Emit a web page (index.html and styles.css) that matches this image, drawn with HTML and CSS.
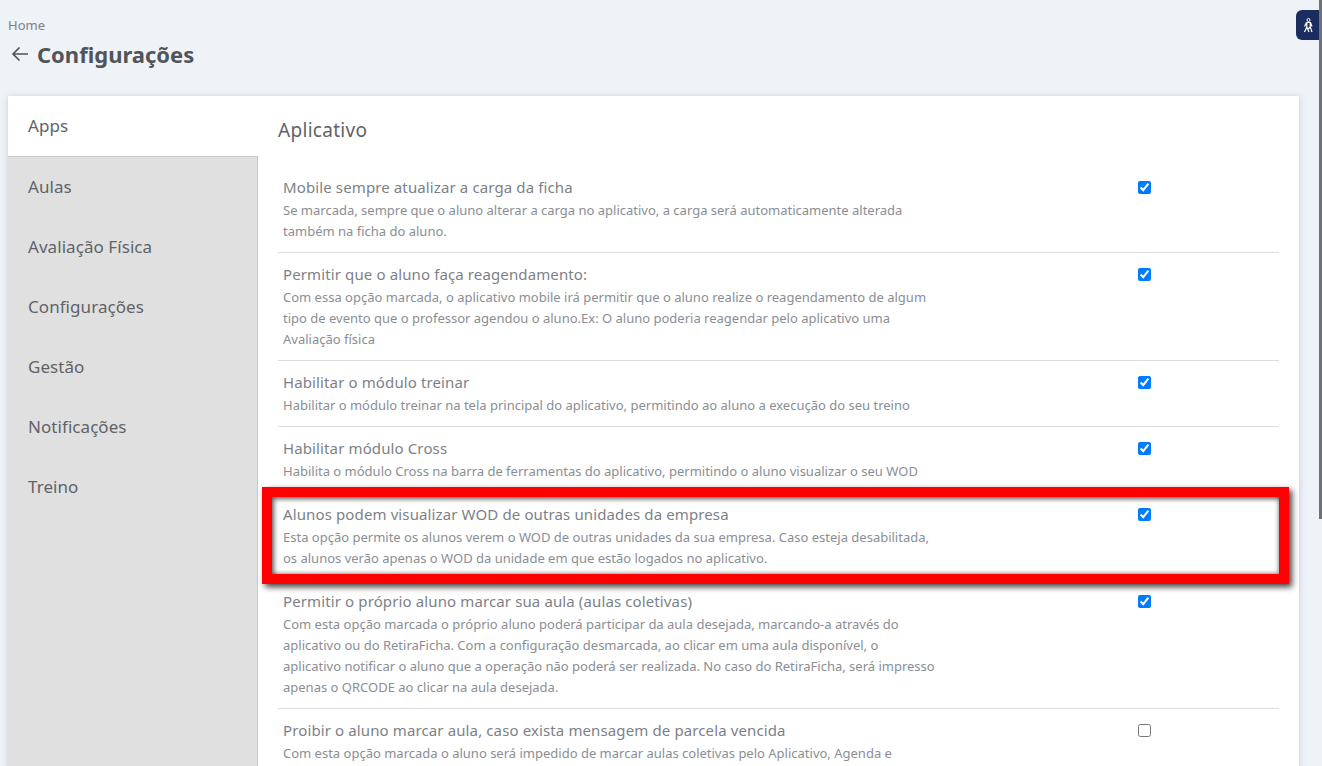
FILE: index.html
```html
<!DOCTYPE html>
<html lang="pt-BR">
<head>
    <meta charset="UTF-8">
    <title>Configurações</title>
    <link rel="stylesheet" href="styles.css">
</head>
<body>
    <div class="page">
        <div class="breadcrumb">Home</div>
        <div class="page-title">
            <svg class="back" viewBox="0 0 18 16" width="18" height="16"><path d="M17 8H2M8.500 1.500L2 8l6.500 6.500" fill="none" stroke="#51555a" stroke-width="1.700"/></svg>
            <h1>Configurações</h1>
        </div>

        <div class="card">
            <ul class="tabs">
                <li class="active">Apps</li>
                <li>Aulas</li>
                <li>Avaliação Física</li>
                <li>Configurações</li>
                <li>Gestão</li>
                <li>Notificações</li>
                <li>Treino</li>
            </ul>
            <div class="content">
                <h2>Aplicativo</h2>

                <div class="row">
                    <div>
                        <div class="title">Mobile sempre atualizar a carga da ficha</div>
                        <div class="desc">Se marcada, sempre que o aluno alterar a carga no aplicativo, a carga será automaticamente alterada<br>também na ficha do aluno.</div>
                    </div>
                    <input type="checkbox" checked>
                </div>
                <div class="row">
                    <div>
                        <div class="title">Permitir que o aluno faça reagendamento:</div>
                        <div class="desc">Com essa opção marcada, o aplicativo mobile irá permitir que o aluno realize o reagendamento de algum<br>tipo de evento que o professor agendou o aluno.Ex: O aluno poderia reagendar pelo aplicativo uma<br>Avaliação física</div>
                    </div>
                    <input type="checkbox" checked>
                </div>
                <div class="row">
                    <div>
                        <div class="title">Habilitar o módulo treinar</div>
                        <div class="desc">Habilitar o módulo treinar na tela principal do aplicativo, permitindo ao aluno a execução do seu treino</div>
                    </div>
                    <input type="checkbox" checked>
                </div>
                <div class="row">
                    <div>
                        <div class="title">Habilitar módulo Cross</div>
                        <div class="desc">Habilita o módulo Cross na barra de ferramentas do aplicativo, permitindo o aluno visualizar o seu WOD</div>
                    </div>
                    <input type="checkbox" checked>
                </div>
                <div class="row highlighted">
                    <div>
                        <div class="title">Alunos podem visualizar WOD de outras unidades da empresa</div>
                        <div class="desc">Esta opção permite os alunos verem o WOD de outras unidades da sua empresa. Caso esteja desabilitada,<br>os alunos verão apenas o WOD da unidade em que estão logados no aplicativo.</div>
                    </div>
                    <input type="checkbox" checked>
                    <div class="red-box"></div>
                </div>
                <div class="row">
                    <div>
                        <div class="title">Permitir o próprio aluno marcar sua aula (aulas coletivas)</div>
                        <div class="desc">Com esta opção marcada o próprio aluno poderá participar da aula desejada, marcando-a através do<br>aplicativo ou do RetiraFicha. Com a configuração desmarcada, ao clicar em uma aula disponível, o<br>aplicativo notificar o aluno que a operação não poderá ser realizada. No caso do RetiraFicha, será impresso<br>apenas o QRCODE ao clicar na aula desejada.</div>
                    </div>
                    <input type="checkbox" checked>
                </div>
                <div class="row">
                    <div>
                        <div class="title">Proibir o aluno marcar aula, caso exista mensagem de parcela vencida</div>
                        <div class="desc">Com esta opção marcada o aluno será impedido de marcar aulas coletivas pelo Aplicativo, Agenda e</div>
                    </div>
                    <input type="checkbox">
                </div>
            </div>
        </div>
    </div>

    <div class="access-badge">
        <svg viewBox="0 0 10 15" width="10" height="15"><circle cx="5.500" cy="2" r="1.500" fill="none" stroke="#fff" stroke-width="1"/><path d="M3.500 4.500h4L9 8.500M3.500 4.500L1.500 8.500M3.800 4.500V9L1.500 14M7.200 4.500V9L9 14M3.800 9L6 14M7.200 9L5 11" fill="none" stroke="#fff" stroke-width="1.200"/></svg>
    </div>
    <div class="scroll-track"><div class="scroll-thumb"></div></div>
</body>
</html>
```

FILE: styles.css
```css
html, body {
    height: 100%;
}
body {
    margin: 0;
    overflow: hidden;
    background-color: #eff2f7;
    color: #51555a;
    font-family: "Noto Sans", "Open Sans", sans-serif;
}
.page {
    padding: 16px 23px 0 8px;
}
.breadcrumb {
    font-size: 13px;
    line-height: 18px;
    color: #7d8187;
}
.page-title {
    display: flex;
    align-items: center;
    gap: 8px;
    height: 36px;
    margin: 2px 0 24px;
    padding-left: 3px;
}
.page-title h1 {
    margin: 0;
    font-size: 22px;
    font-weight: 700;
    color: #51555a;
}
.back {
    flex: none;
}
.card {
    display: flex;
    background-color: #fff;
    box-shadow: 0 1px 6px rgba(120, 130, 150, 0.35);
}
.tabs {
    flex: none;
    box-sizing: border-box;
    width: 250px;
    margin: 0;
    padding: 0;
    list-style: none;
    background-color: #e0e0e0;
    border-right: 1px solid #c9c9c9;
}
.tabs li {
    height: 60px;
    line-height: 60px;
    padding-left: 20px;
    font-size: 17px;
    letter-spacing: 0.06px;
    color: #5f6368;
}
.tabs li.active {
    box-sizing: border-box;
    height: 61px;
    margin-right: -1px;
    background-color: #fff;
    border-bottom: 1px solid #c9c9c9;
}
.content {
    flex: 1;
    padding: 20px 20px 0;
}
.content h2 {
    margin: 0 0 21px;
    font-size: 19px;
    font-weight: 400;
    letter-spacing: 0.3px;
    line-height: 29px;
    color: #5f6368;
}
.row {
    position: relative;
    display: grid;
    grid-template-columns: 1fr 136px;
    padding: 9px 5px 10px;
    border-bottom: 1px solid #dcdcdc;
}
.row input {
    margin: 6px 0 0;
    width: 13px;
    height: 13px;
    accent-color: #007bff;
}
.title {
    margin-bottom: 1px;
    font-size: 15px;
    line-height: 24px;
    color: #7d8187;
    letter-spacing: 0.12px;
}
.desc {
    font-size: 13px;
    line-height: 21px;
    color: #8a8e94;
}
.row.highlighted {
    border-bottom-color: transparent;
}
.red-box {
    position: absolute;
    left: -16px;
    right: -10px;
    top: -6px;
    bottom: -5px;
    border: 10px solid #ff0000;
    box-shadow: 3px 3px 6px rgba(0, 0, 0, 0.75), inset 2px 2px 5px rgba(0, 0, 0, 0.6), inset -1px -1px 4px rgba(0, 0, 0, 0.3);
    pointer-events: none;
}
.access-badge {
    position: fixed;
    top: 10px;
    right: 3px;
    width: 23px;
    height: 30px;
    display: flex;
    align-items: center;
    justify-content: center;
    background-color: #1b2d5f;
    border-radius: 6px 0 0 6px;
}
.scroll-track {
    position: fixed;
    top: 0;
    right: 0;
    bottom: 0;
    width: 3px;
    background-color: #eff2f7;
}
.scroll-thumb {
    height: 519px;
    background-color: #6e7178;
}
```
